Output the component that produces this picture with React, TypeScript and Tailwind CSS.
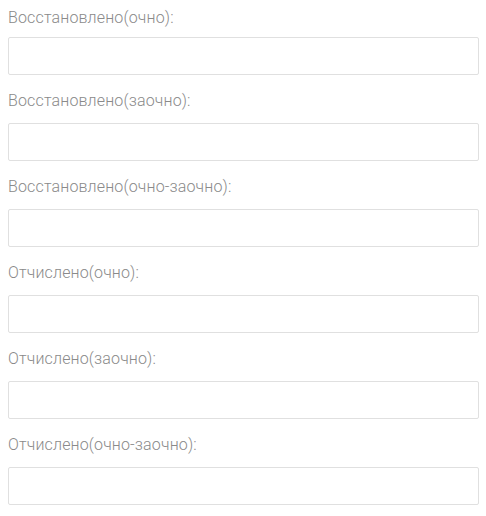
const fields = [
  "Восстановлено(очно):",
  "Восстановлено(заочно):",
  "Восстановлено(очно-заочно):",
  "Отчислено(очно):",
  "Отчислено(заочно):",
  "Отчислено(очно-заочно):",
];

export default function App() {
  return (
    <div className="min-h-[516px] bg-white pl-[8px] pt-[8px] font-['Roboto',sans-serif]">
      {fields.map((label, i) => (
        <div key={label} className={i === 0 ? "" : "mt-[16px]"}>
          <label
            htmlFor={`f${i}`}
            className={`block text-[16px] font-light leading-[20px] tracking-[0.15px] text-[#8a8a8a] ${
              i === 0 ? "mb-[9px]" : "mb-[12px]"
            }`}
          >
            {label}
          </label>
          <input
            id={`f${i}`}
            type="text"
            className="block h-[38px] w-[471px] rounded-[2px] border border-[#e0e0e0] bg-white px-3 text-[14px] text-gray-700 outline-none"
          />
        </div>
      ))}
    </div>
  );
}
